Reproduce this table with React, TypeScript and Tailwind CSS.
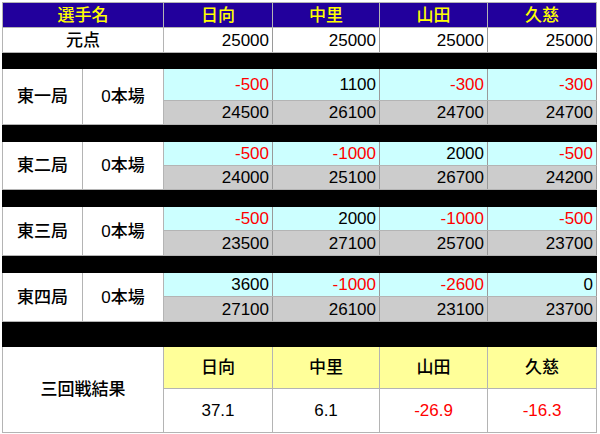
const FONT = {
  fontFamily: '"Liberation Sans", "Noto Sans CJK JP", sans-serif',
};

type Round = {
  name: string;
  honba: string;
  diff: number[];
  total: number[];
  diffH: string;
  totalH: string;
};

const players = ["日向", "中里", "山田", "久慈"];

const rounds: Round[] = [
  { name: "東一局", honba: "0本場", diff: [-500, 1100, -300, -300], total: [24500, 26100, 24700, 24700], diffH: "h-[32px]", totalH: "h-[24px]" },
  { name: "東二局", honba: "0本場", diff: [-500, -1000, 2000, -500], total: [24000, 25100, 26700, 24200], diffH: "h-[24px]", totalH: "h-[24px]" },
  { name: "東三局", honba: "0本場", diff: [-500, 2000, -1000, -500], total: [23500, 27100, 25700, 23700], diffH: "h-[24px]", totalH: "h-[25px]" },
  { name: "東四局", honba: "0本場", diff: [3600, -1000, -2600, 0], total: [27100, 26100, 23100, 23700], diffH: "h-[24px]", totalH: "h-[25px]" },
];

const results = [37.1, 6.1, -26.9, -16.3];

const cell = "border border-[#b4b4b4] p-0";
const num = "text-right pr-[3px] border-r-[#9a9a9a]";

function Spacer({ h }: { h: string }) {
  return (
    <tr className={h}>
      <td colSpan={6} className="bg-black border border-black p-0" />
    </tr>
  );
}

export default function App() {
  return (
    <div className="w-[600px] h-[434px] bg-white pt-[2px] pl-[2px] text-[17px] leading-none text-black font-medium" style={FONT}>
      <table className="table-fixed border-collapse w-[595px]">
        <colgroup>
          <col className="w-[80px]" />
          <col className="w-[81px]" />
          <col className="w-[109px]" />
          <col className="w-[107px]" />
          <col className="w-[108px]" />
          <col className="w-[109px]" />
        </colgroup>
        <tbody>
          <tr className="h-[25px] bg-[#22009c] text-[#ffff00]">
            <td colSpan={2} className={`${cell} text-center`}>選手名</td>
            {players.map((p) => (
              <td key={p} className={`${cell} text-center`}>{p}</td>
            ))}
          </tr>
          <tr className="h-[25px]">
            <td colSpan={2} className={`${cell} text-center`}>元点</td>
            {players.map((p) => (
              <td key={p} className={`${cell} ${num}`}>25000</td>
            ))}
          </tr>
          <Spacer h="h-[16px]" />
          {rounds.map((r, i) => (
            <>
              <tr key={r.name + "a"} className={r.diffH}>
                <td rowSpan={2} className={`${cell} text-center`}>{r.name}</td>
                <td rowSpan={2} className={`${cell} text-center`}>{r.honba}</td>
                {r.diff.map((d, j) => (
                  <td key={j} className={`${cell} ${num} bg-[#ccffff] ${d < 0 ? "text-[#ff0000]" : ""}`}>{d}</td>
                ))}
              </tr>
              <tr key={r.name + "b"} className={r.totalH}>
                {r.total.map((t, j) => (
                  <td key={j} className={`${cell} ${num} bg-[#cccccc]`}>{t}</td>
                ))}
              </tr>
              {i < 3 ? <Spacer key={r.name + "s"} h="h-[17px]" /> : <Spacer key={r.name + "s"} h="h-[25px]" />}
            </>
          ))}
          <tr className="h-[42px]">
            <td colSpan={2} rowSpan={2} className={`${cell} text-center`}>三回戦結果</td>
            {players.map((p) => (
              <td key={p} className={`${cell} text-center bg-[#ffff99]`}>{p}</td>
            ))}
          </tr>
          <tr className="h-[44px]">
            {results.map((v, j) => (
              <td key={j} className={`${cell} text-center ${v < 0 ? "text-[#ff0000]" : ""}`}>{v}</td>
            ))}
          </tr>
        </tbody>
      </table>
    </div>
  );
}
